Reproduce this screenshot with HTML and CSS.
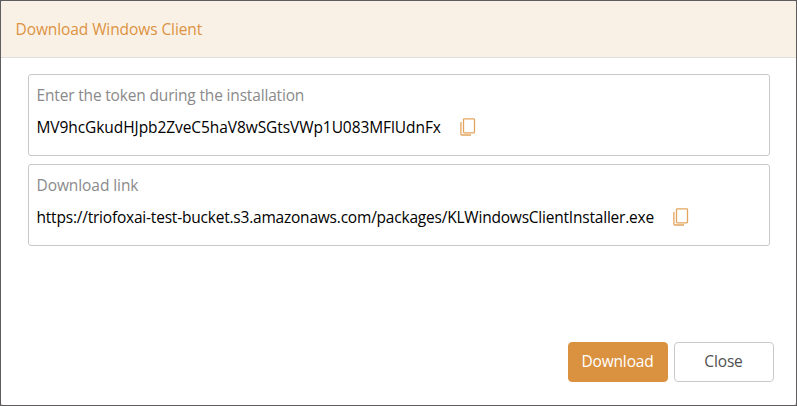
FILE: index.html
```html
<!DOCTYPE html>
<html lang="en">
<head>
    <meta charset="UTF-8">
    <meta name="viewport" content="width=device-width, initial-scale=1.0">
    <title>Download Windows Client</title>
    <link rel="stylesheet" href="styles.css">
</head>
<body>
    <div class="page">
        <div class="dialog">
            <div class="dialog-header"><span class="title">Download Windows Client</span></div>

            <div class="dialog-body">
                <div class="box">
                    <div class="label"><span class="label-token">Enter the token during the installation</span></div>
                    <div class="value">
                        <span class="token">MV9hcGkudHJpb2ZveC5haV8wSGtsVWp1U083MFlUdnFx</span>
                        <svg class="copy" width="16" height="18" viewBox="0 0 16 18">
                            <rect x="3.5" y="0.8" width="11" height="14" rx="0.8"/>
                            <path d="M0.9 4v12a1 1 0 0 0 1 1H11"/>
                        </svg>
                    </div>
                </div>
                <div class="box">
                    <div class="label"><span class="label-link">Download link</span></div>
                    <div class="value">
                        <span class="link">https://triofoxai-test-bucket.s3.amazonaws.com/packages/KLWindowsClientInstaller.exe</span>
                        <svg class="copy" width="16" height="18" viewBox="0 0 16 18">
                            <rect x="3.5" y="0.8" width="11" height="14" rx="0.8"/>
                            <path d="M0.9 4v12a1 1 0 0 0 1 1H11"/>
                        </svg>
                    </div>
                </div>
            </div>

            <div class="dialog-footer">
                <button class="btn btn-primary">Download</button>
                <button class="btn">Close</button>
            </div>
        </div>
    </div>
</body>
</html>
```
FILE: styles.css
```css
* {
    box-sizing: border-box;
}
body {
    margin: 0;
    font-family: "Open Sans", "Noto Sans", sans-serif;
    font-size: 15.5px;
    color: #000;
}
.page {
    height: 406px;
    border: 1px solid #5f5d5e;
    background: #ccc;
}
.dialog {
    display: flex;
    flex-direction: column;
    height: 404px;
    border-radius: 3px;
    overflow: hidden;
    background: #fff;
}
.dialog-header {
    height: 57px;
    padding: 0 14.5px;
    line-height: 56px;
    background: #faf1e6;
    border-bottom: 1px solid #dedede;
    color: #dc9342;
}
.title {
    letter-spacing: -0.09px;
}
.dialog-body {
    flex: 1;
    padding: 16px 26px 0 27px;
}
.box {
    height: 82px;
    margin-bottom: 8px;
    padding: 9px 7.5px;
    border: 1px solid #c8c8c8;
    border-radius: 3px;
}
.label {
    height: 22px;
    line-height: 22px;
    color: #8a8a8a;
}
.label-token {
    letter-spacing: -0.17px;
}
.label-link {
    letter-spacing: -0.08px;
}
.value {
    display: flex;
    align-items: center;
    height: 42px;
    white-space: nowrap;
}
.token {
    letter-spacing: -0.075px;
}
.link {
    letter-spacing: -0.21px;
}
.copy {
    margin-left: 19px;
    fill: none;
    stroke: #e3a45e;
    stroke-width: 1.3;
}
.dialog-footer {
    display: flex;
    justify-content: flex-end;
    gap: 6px;
    padding: 0 22px 23px 0;
}
.btn {
    width: 100px;
    height: 40px;
    padding: 0 1px 3px 0;
    border: 1px solid #c8c8c8;
    border-radius: 4px;
    background: #fff;
    color: #505050;
    font: inherit;
    letter-spacing: -0.15px;
}
.btn-primary {
    border-color: #db9240;
    background: #db9240;
    color: #fff;
}
```
